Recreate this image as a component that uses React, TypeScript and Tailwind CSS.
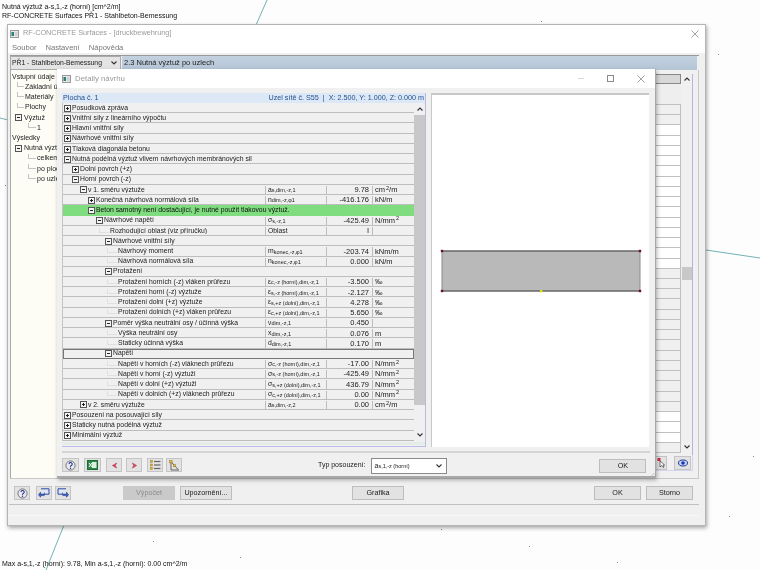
import React from "react";

interface RowData {
  label: string;
  level: number;
  node?: "plus" | "minus" | "leaf";
  sym?: string;
  sub?: string;
  val?: string;
  unit?: string;
  sup?: string;
  unitEnd?: string;
  green?: boolean;
  focus?: boolean;
}

// indent per tree level, written out so tailwind picks the classes up
const indent: Record<number, string> = {
  0: "ml-[1px]",
  1: "ml-[9px]",
  2: "ml-[17px]",
  3: "ml-[25px]",
  4: "ml-[33px]",
  5: "ml-[42px]",
};

const leafIndent: Record<number, string> = {
  4: "ml-[36px]",
  5: "ml-[44px]",
};

const rows: RowData[] = [
  { label: "Posudková zpráva", level: 0, node: "plus" },
  { label: "Vnitřní síly z lineárního výpočtu", level: 0, node: "plus" },
  { label: "Hlavní vnitřní síly", level: 0, node: "plus" },
  { label: "Návrhové vnitřní síly", level: 0, node: "plus" },
  { label: "Tlaková diagonála betonu", level: 0, node: "plus" },
  { label: "Nutná podélná výztuž vlivem návrhových membránových sil", level: 0, node: "minus" },
  { label: "Dolní povrch (+z)", level: 1, node: "plus" },
  { label: "Horní povrch (-z)", level: 1, node: "minus" },
  { label: "v 1. směru výztuže", level: 2, node: "minus", sym: "a", sub: "s,dim,-z,1", val: "9.78", unit: "cm", sup: "2", unitEnd: "/m" },
  { label: "Konečná návrhová normálová síla", level: 3, node: "plus", sym: "n", sub: "dim,-z,φ1", val: "-416.176", unit: "kN/m" },
  { label: "Beton samotný není dostačující, je nutné použít tlakovou výztuž.", level: 3, node: "minus", green: true },
  { label: "Návrhové napětí", level: 4, node: "minus", sym: "σ", sub: "s,-z,1", val: "-425.49", unit: "N/mm", sup: "2" },
  { label: "Rozhodující oblast (viz příručku)", level: 4, node: "leaf", sym: "Oblast", val: "I" },
  { label: "Návrhové vnitřní síly", level: 5, node: "minus" },
  { label: "Návrhový moment", level: 5, node: "leaf", sym: "m", sub: "konec,-z,φ1", val: "-203.74", unit: "kNm/m" },
  { label: "Návrhová normálová síla", level: 5, node: "leaf", sym: "n", sub: "konec,-z,φ1", val: "0.000", unit: "kN/m" },
  { label: "Protažení", level: 5, node: "minus" },
  { label: "Protažení horních (-z) vláken průřezu", level: 5, node: "leaf", sym: "ε", sub: "c,-z (horní),dim,-z,1", val: "-3.500", unit: "‰" },
  { label: "Protažení horní (-z) výztuže", level: 5, node: "leaf", sym: "ε", sub: "s,-z (horní),dim,-z,1", val: "-2.127", unit: "‰" },
  { label: "Protažení dolní (+z) výztuže", level: 5, node: "leaf", sym: "ε", sub: "s,+z (dolní),dim,-z,1", val: "4.278", unit: "‰" },
  { label: "Protažení dolních (+z) vláken průřezu", level: 5, node: "leaf", sym: "ε", sub: "c,+z (dolní),dim,-z,1", val: "5.650", unit: "‰" },
  { label: "Poměr výška neutrální osy / účinná výška", level: 5, node: "minus", sym: "ν", sub: "dim,-z,1", val: "0.450" },
  { label: "Výška neutrální osy", level: 5, node: "leaf", sym: "x", sub: "dim,-z,1", val: "0.076", unit: "m" },
  { label: "Staticky účinná výška", level: 5, node: "leaf", sym: "d", sub: "dim,-z,1", val: "0.170", unit: "m" },
  { label: "Napětí", level: 5, node: "minus", focus: true },
  { label: "Napětí v horních (-z) vláknech průřezu", level: 5, node: "leaf", sym: "σ", sub: "c,-z (horní),dim,-z,1", val: "-17.00", unit: "N/mm", sup: "2" },
  { label: "Napětí v horní (-z) výztuži", level: 5, node: "leaf", sym: "σ", sub: "s,-z (horní),dim,-z,1", val: "-425.49", unit: "N/mm", sup: "2" },
  { label: "Napětí v dolní (+z) výztuži", level: 5, node: "leaf", sym: "σ", sub: "s,+z (dolní),dim,-z,1", val: "436.79", unit: "N/mm", sup: "2" },
  { label: "Napětí v dolních (+z) vláknech průřezu", level: 5, node: "leaf", sym: "σ", sub: "c,+z (dolní),dim,-z,1", val: "0.00", unit: "N/mm", sup: "2" },
  { label: "v 2. směru výztuže", level: 2, node: "plus", sym: "a", sub: "s,dim,-z,2", val: "0.00", unit: "cm", sup: "2", unitEnd: "/m" },
  { label: "Posouzení na posouvající síly", level: 0, node: "plus" },
  { label: "Staticky nutná podélná výztuž", level: 0, node: "plus" },
  { label: "Minimální výztuž", level: 0, node: "plus" },
];

const TreeBox: React.FC<{ open?: boolean }> = ({ open }) => (
  <svg width="7" height="7" viewBox="0 0 7 7" className="shrink-0">
    <rect x="0.5" y="0.5" width="6" height="6" fill="#f4f4f4" stroke="#555" />
    <path d="M2 3.5h3" stroke="#222" />
    {!open && <path d="M3.5 2v3" stroke="#222" />}
  </svg>
);

const Row: React.FC<{ row: RowData }> = ({ row }) => {
  const hasColumns = row.sym !== undefined || row.val !== undefined;
  return (
    <div
      className={`flex h-[10.24px] items-center border-b pt-[1px] text-[6.8px] leading-none ${
        row.green ? "bg-[#7fdc7f] border-[#7fdc7f] text-[#111]" : "bg-[#f0f0f0] border-[#bdbdbd]"
      } ${row.focus ? "outline outline-1 -outline-offset-1 outline-[#777]" : ""}`}
    >
      <div className={`flex min-w-0 items-center overflow-hidden whitespace-nowrap ${hasColumns ? "w-[202px]" : "flex-1"}`}>
        {row.node === "leaf" ? (
          <span className={`${leafIndent[row.level]} mr-[1px] h-[5px] w-[10px] shrink-0 self-start border-b border-l border-[#e0e0e0]`} />
        ) : (
          <span className={`${indent[row.level]} mr-[1px] flex`}>
            <TreeBox open={row.node === "minus"} />
          </span>
        )}
        <span>{row.label}</span>
      </div>
      {hasColumns && (
        <>
          <div className="flex h-full w-[61px] items-center whitespace-nowrap border-l border-[#bdbdbd] pl-[2px]">
            {row.sym}
            {row.sub && <span className="mt-[2px] text-[5.5px]">{row.sub}</span>}
          </div>
          <div className="flex h-full w-[46px] items-center justify-end border-l border-[#bdbdbd] pr-[3px] text-[7.5px]">{row.val}</div>
          <div className="flex h-full flex-1 items-center whitespace-nowrap border-l border-[#bdbdbd] pl-[2px] text-[7.5px]">
            {row.unit}
            {row.sup && <span className="mb-[3px] ml-[1px] text-[5.5px]">{row.sup}</span>}
            {row.unitEnd}
          </div>
        </>
      )}
    </div>
  );
};

const Chevron: React.FC<{ up?: boolean }> = ({ up }) => (
  <svg width="6" height="4" viewBox="0 0 6 4" className="shrink-0">
    <path d={up ? "M0.5 3.5 3 1l2.5 2.5" : "M0.5 0.5 3 3l2.5-2.5"} fill="none" stroke="#333" strokeWidth="1.1" />
  </svg>
);

const AppIcon = () => (
  <svg width="9" height="8" viewBox="0 0 9 8" className="shrink-0">
    <rect x="0.5" y="0.5" width="8" height="7" fill="#e8e8e8" stroke="#9a9a9a" />
    <rect x="1.5" y="2" width="2.5" height="4" fill="#2f7f6f" />
    <rect x="5" y="2" width="2.5" height="4" fill="#c8d0d8" />
  </svg>
);

const CloseX = () => (
  <svg width="8" height="8" viewBox="0 0 8 8">
    <path d="M0.5 0.5l7 7M7.5 0.5l-7 7" stroke="#8a8a8a" strokeWidth="0.8" />
  </svg>
);

const IconBtn: React.FC<{ children?: React.ReactNode; cls: string }> = ({ children, cls }) => (
  <div className={`flex h-[14px] items-center justify-center border border-[#c4c4c4] bg-[#e2e2e2] ${cls}`}>{children}</div>
);

const HelpIcon = () => (
  <svg width="11" height="11" viewBox="0 0 11 11">
    <circle cx="5.5" cy="5.5" r="4.6" fill="#e8e8f0" stroke="#777" />
    <path d="M4 4a1.6 1.6 0 1 1 2.2 1.6c-.6.3-.7.6-.7 1.2" fill="none" stroke="#20308a" strokeWidth="1.1" />
    <circle cx="5.5" cy="8.3" r="0.7" fill="#20308a" />
  </svg>
);

const ExcelIcon = () => (
  <svg width="11" height="10" viewBox="0 0 11 10">
    <rect x="0.5" y="0.5" width="10" height="9" fill="#2e8b4a" stroke="#1d6a36" />
    <rect x="5" y="2" width="4.5" height="6" fill="#d8f0dc" />
    <path d="M2 3l3 4M5 3L2 7" stroke="#fff" />
  </svg>
);

const RedArrow: React.FC<{ right?: boolean }> = ({ right }) => (
  <svg width="7" height="7" viewBox="0 0 8 8">
    <path d={right ? "M1.5 1l5 3-5 3 1.5-3z" : "M6.5 1l-5 3 5 3-1.5-3z"} fill="#d8475a" stroke="#b02840" strokeWidth="0.5" />
  </svg>
);

const ListIcon = () => (
  <svg width="11" height="10" viewBox="0 0 11 10">
    {[1.5, 5, 8.5].map((y) => (
      <g key={y}>
        <rect x="0.5" y={y - 1} width="2" height="2" fill="#e0b030" stroke="#907018" strokeWidth="0.4" />
        <path d={`M4 ${y}h6.5`} stroke="#666" strokeWidth="1.2" />
      </g>
    ))}
  </svg>
);

const TreeIcon = () => (
  <svg width="11" height="11" viewBox="0 0 11 11">
    <path d="M2 1.5v8.5h8M2 1.5l7 8" fill="none" stroke="#444" strokeWidth="0.8" />
    <rect x="0.7" y="0.5" width="2.4" height="2.4" fill="#e8c030" stroke="#806010" strokeWidth="0.4" />
    <rect x="4.4" y="4.6" width="2.2" height="2.2" fill="#e8c030" stroke="#806010" strokeWidth="0.4" />
  </svg>
);

const PageArrows: React.FC<{ flip?: boolean }> = ({ flip }) => (
  <svg width="12" height="11" viewBox="0 0 12 11" className={flip ? "-scale-x-100" : ""}>
    <path d="M3 0.8h8v5.4H6" fill="#dfe6f5" stroke="#2a48a0" />
    <path d="M6.5 4.5v1.6h-4V4.2L0.5 6.8l2 2.4V7.6h4" fill="#3c62c8" stroke="#1d3a90" strokeWidth="0.6" />
  </svg>
);

const Btn: React.FC<{ children: React.ReactNode; cls: string }> = ({ children, cls }) => (
  <div className={`flex h-[14px] items-center justify-center border border-[#bdbdbd] bg-[#e2e2e2] text-[7.2px] leading-none ${cls}`}>{children}</div>
);

const treeRows = [
  { t: "Vstupní údaje", c: "ml-[1px]" },
  { t: "Základní údaje", line: "ml-[6px] w-[7px]" },
  { t: "Materiály", line: "ml-[6px] w-[7px]" },
  { t: "Plochy", line: "ml-[6px] w-[7px]" },
  { t: "Výztuž", c: "ml-[4px]", box: true },
  { t: "1", line: "ml-[17px] w-[8px]" },
  { t: "Výsledky", c: "ml-[1px]" },
  { t: "Nutná výztuž", c: "ml-[4px]", box: true },
  { t: "celkem", line: "ml-[17px] w-[8px]" },
  { t: "po plochách", line: "ml-[17px] w-[8px]" },
  { t: "po uzlech", line: "ml-[17px] w-[8px]" },
];

// rows of the table behind the dialog: white / grey bands
const backRows = Array.from({ length: 34 }, (_, i) => (i >= 2 && i < 16) || (i >= 30 && i < 33));

export default function App() {
  return (
    <div className="relative h-[570px] w-[760px] overflow-hidden bg-[#fdfdfd] font-['Liberation_Sans',sans-serif] text-[#1a1a1a] blur-[0.4px]">
      {/* model lines of the drawing behind the windows */}
      <svg width="760" height="570" className="absolute inset-0">
        <path d="M267 0 256 25M64 525 46 570M0 118 8 120M706 250 760 258" stroke="#4f9f9f" strokeWidth="0.8" fill="none" />
        {[[73, 5], [541, 21], [718, 54], [153, 541], [240, 557], [441, 529], [529, 546], [617, 562], [729, 516], [753, 456], [5, 185]].map(([x, y]) => (
          <rect key={x} x={x} y={y} width="1" height="1" fill="#888" />
        ))}
      </svg>

      <div className="absolute left-[2px] top-[2px] text-[7px] leading-[9.4px] text-[#111]">
        <div>Nutná výztuž a-s,1,-z (horní) [cm^2/m]</div>
        <div>RF-CONCRETE Surfaces PŘ1 - Stahlbeton-Bemessung</div>
      </div>
      <div className="absolute bottom-[2px] left-[2px] text-[7px] leading-[9px] text-[#111]">
        Max a-s,1,-z (horní): 9.78, Min a-s,1,-z (horní): 0.00 cm^2/m
      </div>

      {/* main window */}
      <div className="absolute left-[7px] top-[24px] flex h-[502px] w-[699px] flex-col border border-[#b4b4b4] bg-[#f0f0f0] shadow-[1px_2px_4px_rgba(0,0,0,0.35)]">
        <div className="h-[28px] bg-white">
          <div className="flex h-[16px] items-center gap-[4px] pl-[2px] pr-[6px] pt-[1px]">
            <AppIcon />
            <span className="flex-1 text-[7.3px] text-[#9a9a9a]">RF-CONCRETE Surfaces - [druckbewehrung]</span>
            <CloseX />
          </div>
          <div className="flex h-[14px] items-center gap-[9px] pl-[4px] text-[7.6px] text-[#777]">
            <span>Soubor</span>
            <span>Nastavení</span>
            <span>Nápověda</span>
          </div>
        </div>

        <div className="ml-[2px] mr-[6px] mt-[2px] flex h-[15px] gap-[1px] border-t border-[#999]">
          <div className="flex w-[111px] items-center justify-between border border-[#aaa] bg-[#e4e4e4] pl-[1px] pr-[3px] text-[6.8px]">
            PŘ1 - Stahlbeton-Bemessung
            <Chevron />
          </div>
          <div className="mr-[2px] flex flex-1 items-center bg-gradient-to-b from-[#c3d1df] to-[#b4c5d6] pl-[2px] text-[7.5px] text-[#222]">
            2.3 Nutná výztuž po uzlech
          </div>
        </div>

        <div className="ml-[2px] mr-[6px] flex h-[409px] border-b border-r border-[#c8c8c8]">
          <div className="h-full w-[50px] border-l border-[#aaa] bg-[#fdfdf6] pt-[2px] text-[7px]">
            {treeRows.map((r) => (
              <div key={r.t} className={`flex h-[10.2px] items-center whitespace-nowrap ${r.c ?? ""}`}>
                {r.line && <span className={`mr-[1px] h-[5px] shrink-0 self-start border-b border-l border-[#c4c4c4] ${r.line}`} />}
                {r.box && (
                  <span className="mr-[2px]">
                    <TreeBox open />
                  </span>
                )}
                {r.t}
              </div>
            ))}
          </div>
          <div className="flex-1" />
          <div className="mb-[7px] mr-[5px] mt-[4px] flex w-[38px] flex-col">
            <div className="flex flex-1">
              <div className="w-[26px]">
                <div className="h-[10px] border border-[#888] bg-[#d8d8d8]" />
                <div className="h-[21px] border-b border-[#c0c0c0] bg-[#eeeeee]" />
                {backRows.map((white, i) => (
                  <div key={i} className={`h-[10.24px] border-b border-r border-[#c0c0c0] ${white ? "bg-white" : "bg-[#f0f0f0]"}`} />
                ))}
              </div>
              <div className="flex w-[11px] flex-col items-center bg-[#f0f0f0] pb-[6px] pt-[3px]">
                <Chevron up />
                <div className="mt-[186px] h-[13px] w-[10px] bg-[#c8c8c8]" />
                <div className="mt-auto flex">
                  <Chevron />
                </div>
              </div>
              <div className="w-[1px] bg-[#b4b4e0]" />
            </div>
            <div className="flex h-[16px] items-start justify-end gap-[7px] border-b border-r border-[#d4d4f0] pr-[1px] pt-[1px]">
              <IconBtn cls="w-[12px]">
                <svg width="8" height="10" viewBox="0 0 8 10">
                  <path d="M0.5 0h3v3h-3z" fill="#c83040" />
                  <path d="M3 3v6l1.5-1.4L6 9.5l1-.5-1.2-2H7.6z" fill="#fff" stroke="#222" strokeWidth="0.6" />
                </svg>
              </IconBtn>
              <IconBtn cls="w-[17px]">
                <svg width="10" height="10" viewBox="0 0 10 10">
                  <ellipse cx="5" cy="5" rx="4.5" ry="3" fill="#c8d4f4" stroke="#2a3f9a" />
                  <circle cx="5" cy="5" r="1.8" fill="#1d3ab0" />
                </svg>
              </IconBtn>
            </div>
          </div>
        </div>

        <div className="mt-[7px] flex h-[14px] items-start pl-[6px]">
          <IconBtn cls="w-[16px]"><HelpIcon /></IconBtn>
          <IconBtn cls="ml-[6px] w-[16px]"><PageArrows /></IconBtn>
          <IconBtn cls="ml-[3px] w-[16px]"><PageArrows flip /></IconBtn>
          <Btn cls="ml-[52px] w-[52px] !bg-[#cacaca] !border-[#cacaca] text-[#8c8c8c]">Výpočet</Btn>
          <Btn cls="ml-[5px] w-[52px]">Upozornění...</Btn>
          <Btn cls="ml-[120px] w-[52px]">Grafika</Btn>
          <Btn cls="ml-[190px] w-[47px]">OK</Btn>
          <Btn cls="ml-[5px] w-[47px]">Storno</Btn>
        </div>
        <div className="mx-[1px] mr-[6px] mt-[4px] h-[12px] border-t border-[#c0c0c0] border-b border-b-[#f8f8f8]" />
      </div>

      {/* detail dialog */}
      <div className="absolute left-[57px] top-[69px] flex h-[409px] w-[599px] flex-col border-b-2 border-r border-[#a8a8a8] bg-[#f0f0f0] shadow-[1px_2px_4px_rgba(0,0,0,0.3)]">
        <div className="flex h-[19px] shrink-0 items-center gap-[4px] bg-white pl-[5px] pr-[10px]">
          <AppIcon />
          <span className="flex-1 text-[7.8px] text-[#9a9a9a]">Detaily návrhu</span>
          <span className="mr-[19px] h-px w-[6px] bg-[#d8d8d8]" />
          <span className="mr-[19px] h-[7px] w-[7px] border border-[#8a8a8a]" />
          <CloseX />
        </div>

        <div className="flex h-[359px] gap-[5px] pl-[5px] pr-[6px] pt-[5px]">
          <div className="flex w-[364px] flex-col border-r border-[#b8b8e4]">
            <div className="flex h-[10px] shrink-0 items-center justify-between bg-[#dce8f6] px-[1px] text-[7.2px] text-[#1f4f8f]">
              <span>Plocha č. 1</span>
              <span>Uzel sítě č. S55&nbsp;&nbsp;|&nbsp;&nbsp;X: 2.500, Y: 1.000, Z: 0.000 m</span>
            </div>
            <div className="flex">
              <div className="w-[352px] border-l border-[#c4c4c4]">
                {rows.map((r) => (
                  <Row key={r.label + r.level + (r.sub ?? "")} row={r} />
                ))}
              </div>
              <div className="flex flex-1 flex-col">
                <div className="flex h-[12px] items-center justify-center bg-[#f0f0f0]">
                  <Chevron up />
                </div>
                <div className="mb-[24px] flex-1 bg-[#c8c8c8]" />
                <div className="flex h-[12px] items-center justify-center bg-[#f0f0f0]">
                  <Chevron />
                </div>
              </div>
            </div>
            <div className="mt-[1px] h-[3px] bg-[#e4ece6]" />
            <div className="mt-[1px] h-px bg-[#bcbcec]" />
          </div>
          <div className="flex flex-1 items-center justify-center border-t-2 border-l border-[#c8c8c8] bg-white">
            <svg width="204" height="46" viewBox="0 0 204 46">
              <rect x="3" y="3" width="198" height="40" fill="#b9b9b9" stroke="#8c8c8c" />
              <path d="M3 3h198M3 43h198" stroke="#555" />
              {[[3, 3], [201, 3], [3, 43], [201, 43]].map(([x, y]) => (
                <rect key={`${x}-${y}`} x={x - 1.2} y={y - 1.2} width="2.4" height="2.4" fill="#6a1020" />
              ))}
              <rect x="101" y="42" width="2.4" height="2.4" fill="#e4e400" />
            </svg>
          </div>
        </div>

        <div className="mx-[5px] mt-[4px] h-[2px] shrink-0 bg-[#d4d4d4]" />

        <div className="relative mt-[5px] flex items-start pl-[5px]">
          <IconBtn cls="w-[17px]"><HelpIcon /></IconBtn>
          <IconBtn cls="ml-[5px] w-[17px]"><ExcelIcon /></IconBtn>
          <IconBtn cls="ml-[5px] w-[16px]"><RedArrow /></IconBtn>
          <IconBtn cls="ml-[4px] w-[16px]"><RedArrow right /></IconBtn>
          <IconBtn cls="ml-[5px] w-[16px]"><ListIcon /></IconBtn>
          <IconBtn cls="ml-[3px] w-[16px]"><TreeIcon /></IconBtn>
          <span className="ml-[136px] mt-[3px] whitespace-nowrap text-[7px] leading-none">Typ posouzení:</span>
          <div className="ml-[6px] flex h-[16px] w-[76px] items-center justify-between border border-[#8a8a8a] bg-white pl-[2px] pr-[4px] text-[7px]">
            <span>
              a<span className="text-[5.5px]">s,1,-z (horní)</span>
            </span>
            <Chevron />
          </div>
          <Btn cls="ml-[152px] mt-[1px] w-[47px]">OK</Btn>
          <svg width="8" height="8" viewBox="0 0 8 8" className="absolute bottom-[-6px] right-0">
            <path d="M7.5 1 1 7.5M7.5 3.5 3.5 7.5M7.5 6 6 7.5" stroke="#a8a8a8" strokeWidth="0.7" />
          </svg>
        </div>
      </div>
    </div>
  );
}
